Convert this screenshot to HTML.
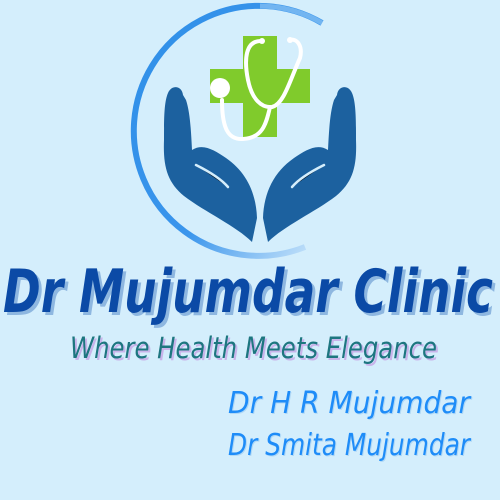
<!DOCTYPE html>
<html><head><meta charset="utf-8"><style>
html,body{margin:0;padding:0;background:#d4eefc;width:500px;height:500px;overflow:hidden}
</style></head><body>
<svg width="500" height="500" viewBox="0 0 500 500" xmlns="http://www.w3.org/2000/svg">
<defs>
<linearGradient id="arc" x1="0" y1="0" x2="1" y2="1">
<stop offset="0" stop-color="#2f8fe8"/><stop offset="0.6" stop-color="#3a95ec"/><stop offset="1" stop-color="#cfe8fb"/>
</linearGradient>
</defs>
<rect width="500" height="500" fill="#d4eefc"/>
<path d="M322,23 A125,125 0 1 0 305,247" fill="none" stroke="url(#arc)" stroke-width="6"/>
<path d="M322,23 A125,125 0 0 0 260,6" fill="none" stroke="#8cc3f3" stroke-width="5" opacity="0.7"/>
<rect x="243" y="36" width="34" height="101" fill="#80cb2c"/>
<rect x="210" y="69" width="100" height="34" fill="#80cb2c"/>
<g fill="none" stroke="#fff" stroke-width="4" stroke-linecap="round">
<path d="M262,41 C245,40 244,60 248,80 C252,100 262,108 272,107 C284,104 290,80 300,58 C303,46 297,38 290,40"/>
<path d="M270,107 C266,125 262,138 243,139 C228,140 222,128 222,100"/>
</g>
<circle cx="220" cy="88" r="10" fill="#fff"/>
<circle cx="262" cy="41" r="3" fill="#fff"/><circle cx="290" cy="40" r="3" fill="#fff"/>
<g fill="#1c619f">
<path id="lh" d="M168,93 C172,84 182,86 183,95 L186,100 C190,112 191,130 192,150 C203,143 214,150 226,158 C246,172 256,192 257,218 L252,242 C236,226 205,212 184,196 C167,182 163,166 164,140 C164,120 164,102 168,93 Z"/>
<use href="#lh" transform="translate(520,0) scale(-1,1)"/>
</g>
<g stroke="#d4eefc" stroke-width="2.5" stroke-linecap="round">
<path d="M196,165 C210,172 222,180 228,187"/>
<path d="M324,165 C310,172 298,180 292,187"/>
</g>
<g font-family="'DejaVu Sans','Liberation Sans',sans-serif" font-style="italic" font-weight="bold">
<text x="6" y="315" font-size="60" fill="#8eb7e0" textLength="490" lengthAdjust="spacingAndGlyphs">Dr Mujumdar Clinic</text>
<text x="3" y="312" font-size="60" fill="#0b4aa6" textLength="490" lengthAdjust="spacingAndGlyphs">Dr Mujumdar Clinic</text>
</g>
<g font-family="'DejaVu Sans','Liberation Sans',sans-serif" font-style="italic">
<text x="72" y="360" font-size="29" fill="#c9b4ea" textLength="367" lengthAdjust="spacingAndGlyphs">Where Health Meets Elegance</text>
<text x="70" y="358" font-size="29" fill="#1d7680" textLength="367" lengthAdjust="spacingAndGlyphs">Where Health Meets Elegance</text>
<text x="229" y="414" font-size="30" fill="#b0d8f5" textLength="242" lengthAdjust="spacingAndGlyphs">Dr H R Mujumdar</text>
<text x="228" y="413" font-size="30" fill="#1e8cf8" textLength="242" lengthAdjust="spacingAndGlyphs">Dr H R Mujumdar</text>
<text x="229" y="456" font-size="30" fill="#b0d8f5" textLength="242" lengthAdjust="spacingAndGlyphs">Dr Smita Mujumdar</text>
<text x="228" y="455" font-size="30" fill="#1e8cf8" textLength="242" lengthAdjust="spacingAndGlyphs">Dr Smita Mujumdar</text>
</g>
</svg>
</body></html>
